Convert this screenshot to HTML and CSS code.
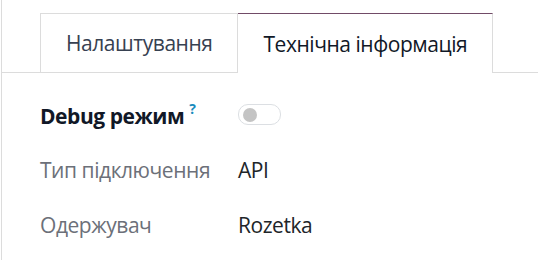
FILE: index.html
```html
<!DOCTYPE html>
<html lang="uk">
<head>
    <meta charset="UTF-8">
    <title>Технічна інформація</title>
    <link rel="stylesheet" href="styles.css">
</head>
<body>

<div class="sheet">
    <ul class="tabs">
        <li class="tab">Налаштування</li>
        <li class="tab active">Технічна інформація</li>
    </ul>

    <div class="fields">
        <div class="row">
            <div class="label strong">Debug режим <sup class="help">?</sup></div>
            <div class="value"><span class="switch"><span class="knob"></span></span></div>
        </div>
        <div class="row">
            <div class="label">Тип підключення</div>
            <div class="value">API</div>
        </div>
        <div class="row">
            <div class="label">Одержувач</div>
            <div class="value">Rozetka</div>
        </div>
    </div>
</div>

</body>
</html>
```

FILE: styles.css
```css
body {
    margin: 0;
    font-family: 'Open Sans', sans-serif;
    font-size: 21px;
    letter-spacing: -0.45px;
    color: #212529;
    background: #fff;
}

.sheet {
    border-left: 1px solid #dcdcdc;
    margin-left: 1px;
    height: 260px;
    padding-top: 13px;
    box-sizing: border-box;
}

.tabs {
    display: flex;
    list-style: none;
    margin: 0;
    padding: 0 0 0 38px;
    border-bottom: 1px solid #dcdcdc;
    height: 59px;
}

.tab {
    padding: 0 25px;
    display: flex;
    align-items: center;
    border: 1px solid #dcdcdc;
    border-bottom: none;
    color: #374151;
    background: #fff;
    height: 59px;
    box-sizing: border-box;
}

.tab + .tab {
    border-left: none;
}

.tab.active {
    color: #111827;
    border-top: 1px solid #714b67;
    height: 60px;
}

.fields {
    padding: 14px 0 0 38px;
}

.row {
    display: flex;
    align-items: center;
    height: 55px;
}

.label {
    width: 198px;
    color: #6c7079;
}

.label.strong {
    color: #111827;
    font-weight: 700;
}

.help {
    color: #1a8bbd;
    font-size: 14px;
    font-weight: 700;
    vertical-align: 10px;
}

.value {
    color: #212529;
}

.switch {
    display: block;
    width: 41px;
    height: 19px;
    border: 1px solid #dcdfe3;
    border-radius: 10px;
    position: relative;
}

.knob {
    position: absolute;
    left: 4px;
    top: 2.5px;
    width: 14px;
    height: 14px;
    border-radius: 50%;
    background: #c4c4c4;
}
```
